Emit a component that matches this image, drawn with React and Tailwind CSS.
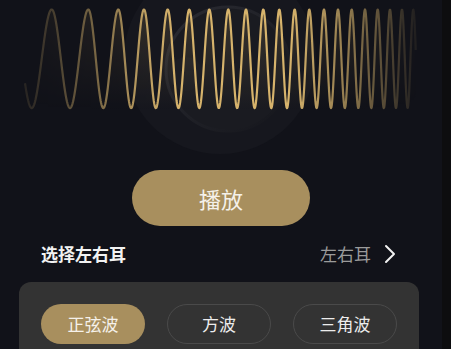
import React, { useState } from 'react';

// phase nodes: trough before the first peak, then one node per peak
const NODES = [[31.7, -0.5], ...[51.7, 88.3, 118.3, 144, 167.7, 189.3, 209.3, 228.3, 246, 263.3, 279.3, 294.7, 309.3, 324, 338, 351.7, 365, 377.7, 390, 402, 413.3].map((x, i) => [x, i])];
const MID = 58.8;
const AMP = 49.3;

const phaseAt = (x) => {
    const n = NODES.length;
    const seg = (a, b) => a[1] + ((x - a[0]) * (b[1] - a[1])) / (b[0] - a[0]);
    if (x <= NODES[0][0]) return seg(NODES[0], NODES[1]);
    for (let i = 0; i < n - 1; i++) {
        if (x <= NODES[i + 1][0]) return seg(NODES[i], NODES[i + 1]);
    }
    return seg(NODES[n - 2], NODES[n - 1]);
};

const buildWave = () => {
    const pts = [];
    for (let x = 25; x <= 416; x += 0.4) {
        const y = MID - AMP * Math.cos(2 * Math.PI * phaseAt(x));
        pts.push(`${x.toFixed(1)},${y.toFixed(2)}`);
    }
    return pts;
};

const WAVE_D = 'M' + buildWave().join(' L');
const FILL_D = WAVE_D + ' L416,110 L25,110 Z';

const Wave = () => (
    <svg width="442" height="160" viewBox="0 0 442 160" className="block shrink-0">
        <defs>
            <linearGradient id="fade" x1="0" y1="0" x2="442" y2="0" gradientUnits="userSpaceOnUse">
                <stop offset={25 / 442} stopColor="#fff" stopOpacity="0.12" />
                <stop offset={60 / 442} stopColor="#fff" stopOpacity="0.32" />
                <stop offset={100 / 442} stopColor="#fff" stopOpacity="0.55" />
                <stop offset={140 / 442} stopColor="#fff" stopOpacity="0.85" />
                <stop offset={175 / 442} stopColor="#fff" stopOpacity="1" />
                <stop offset={290 / 442} stopColor="#fff" stopOpacity="1" />
                <stop offset={340 / 442} stopColor="#fff" stopOpacity="0.7" />
                <stop offset={385 / 442} stopColor="#fff" stopOpacity="0.35" />
                <stop offset={416 / 442} stopColor="#fff" stopOpacity="0.08" />
            </linearGradient>
            <mask id="waveMask" maskUnits="userSpaceOnUse" x="0" y="0" width="442" height="160">
                <rect x="0" y="0" width="442" height="160" fill="url(#fade)" />
            </mask>
            <linearGradient id="glow" x1="0" y1="10" x2="0" y2="110" gradientUnits="userSpaceOnUse">
                <stop offset="0" stopColor="#c9a764" stopOpacity="0.18" />
                <stop offset="0.6" stopColor="#c9a764" stopOpacity="0.07" />
                <stop offset="1" stopColor="#c9a764" stopOpacity="0" />
            </linearGradient>
            <linearGradient id="ring" x1="170" y1="10" x2="290" y2="130" gradientUnits="userSpaceOnUse">
                <stop offset="0" stopColor="#2a2b32" />
                <stop offset="1" stopColor="#15161c" />
            </linearGradient>
        </defs>

        {/* dial in the back */}
        <circle cx="220" cy="58" r="96" fill="#16171e" />
        <circle cx="228" cy="69" r="62" fill="#1a1b21" stroke="url(#ring)" strokeWidth="3" />
        <circle cx="186" cy="74" r="17" fill="#1d1e24" />

        <g mask="url(#waveMask)">
            <path d={FILL_D} fill="url(#glow)" />
            <path d={WAVE_D} fill="none" stroke="#d6b36c" strokeWidth="2.2" strokeLinejoin="round" />
        </g>
    </svg>
);

const waves = ['正弦波', '方波', '三角波'];

export default function App() {
    const [active, setActive] = useState('正弦波');

    return (
        <div
            className="flex h-[349px] w-[451px] overflow-hidden bg-[#111219]"
            style={{ fontFamily: '"Noto Sans CJK SC", "Noto Sans", sans-serif' }}
        >
            <div className="flex w-[442px] shrink-0 flex-col">
                <Wave />

                <button className="mx-auto mt-[10px] flex h-[56px] w-[178px] shrink-0 items-center justify-center rounded-full bg-[#a88f5e] text-[22px] text-[#f5f1ea]">
                    播放
                </button>

                <div className="mt-[8px] flex h-[40px] shrink-0 items-center justify-between pl-[41px] pr-[46px]">
                    <span className="text-[17px] font-bold text-[#f2f2f2]">选择左右耳</span>
                    <div className="flex items-center gap-[13px]">
                        <span className="text-[17px] text-[#9b9b9b]">左右耳</span>
                        <svg width="12" height="20" viewBox="0 0 12 20" fill="none">
                            <path d="M2 2 L10 10 L2 18" stroke="#f2f2f2" strokeWidth="2" strokeLinecap="round" strokeLinejoin="round" />
                        </svg>
                    </div>
                </div>

                <div className="ml-[19px] mt-[8px] w-[400px] shrink-0 rounded-[12px] bg-[#333333] p-[22px]">
                    <div className="grid grid-cols-3 gap-[22px]">
                        {waves.map((w) => (
                            <button
                                key={w}
                                onClick={() => setActive(w)}
                                className={`flex h-[40px] items-center justify-center rounded-full text-[17px] ${
                                    active === w
                                        ? 'bg-[#a88f5e] text-[#f5f1ea]'
                                        : 'border border-[#4a4a4a] text-[#ececec]'
                                }`}
                            >
                                {w}
                            </button>
                        ))}
                    </div>
                </div>
            </div>
            <div className="flex-1 bg-[#0d0d0f]" />
        </div>
    );
}
